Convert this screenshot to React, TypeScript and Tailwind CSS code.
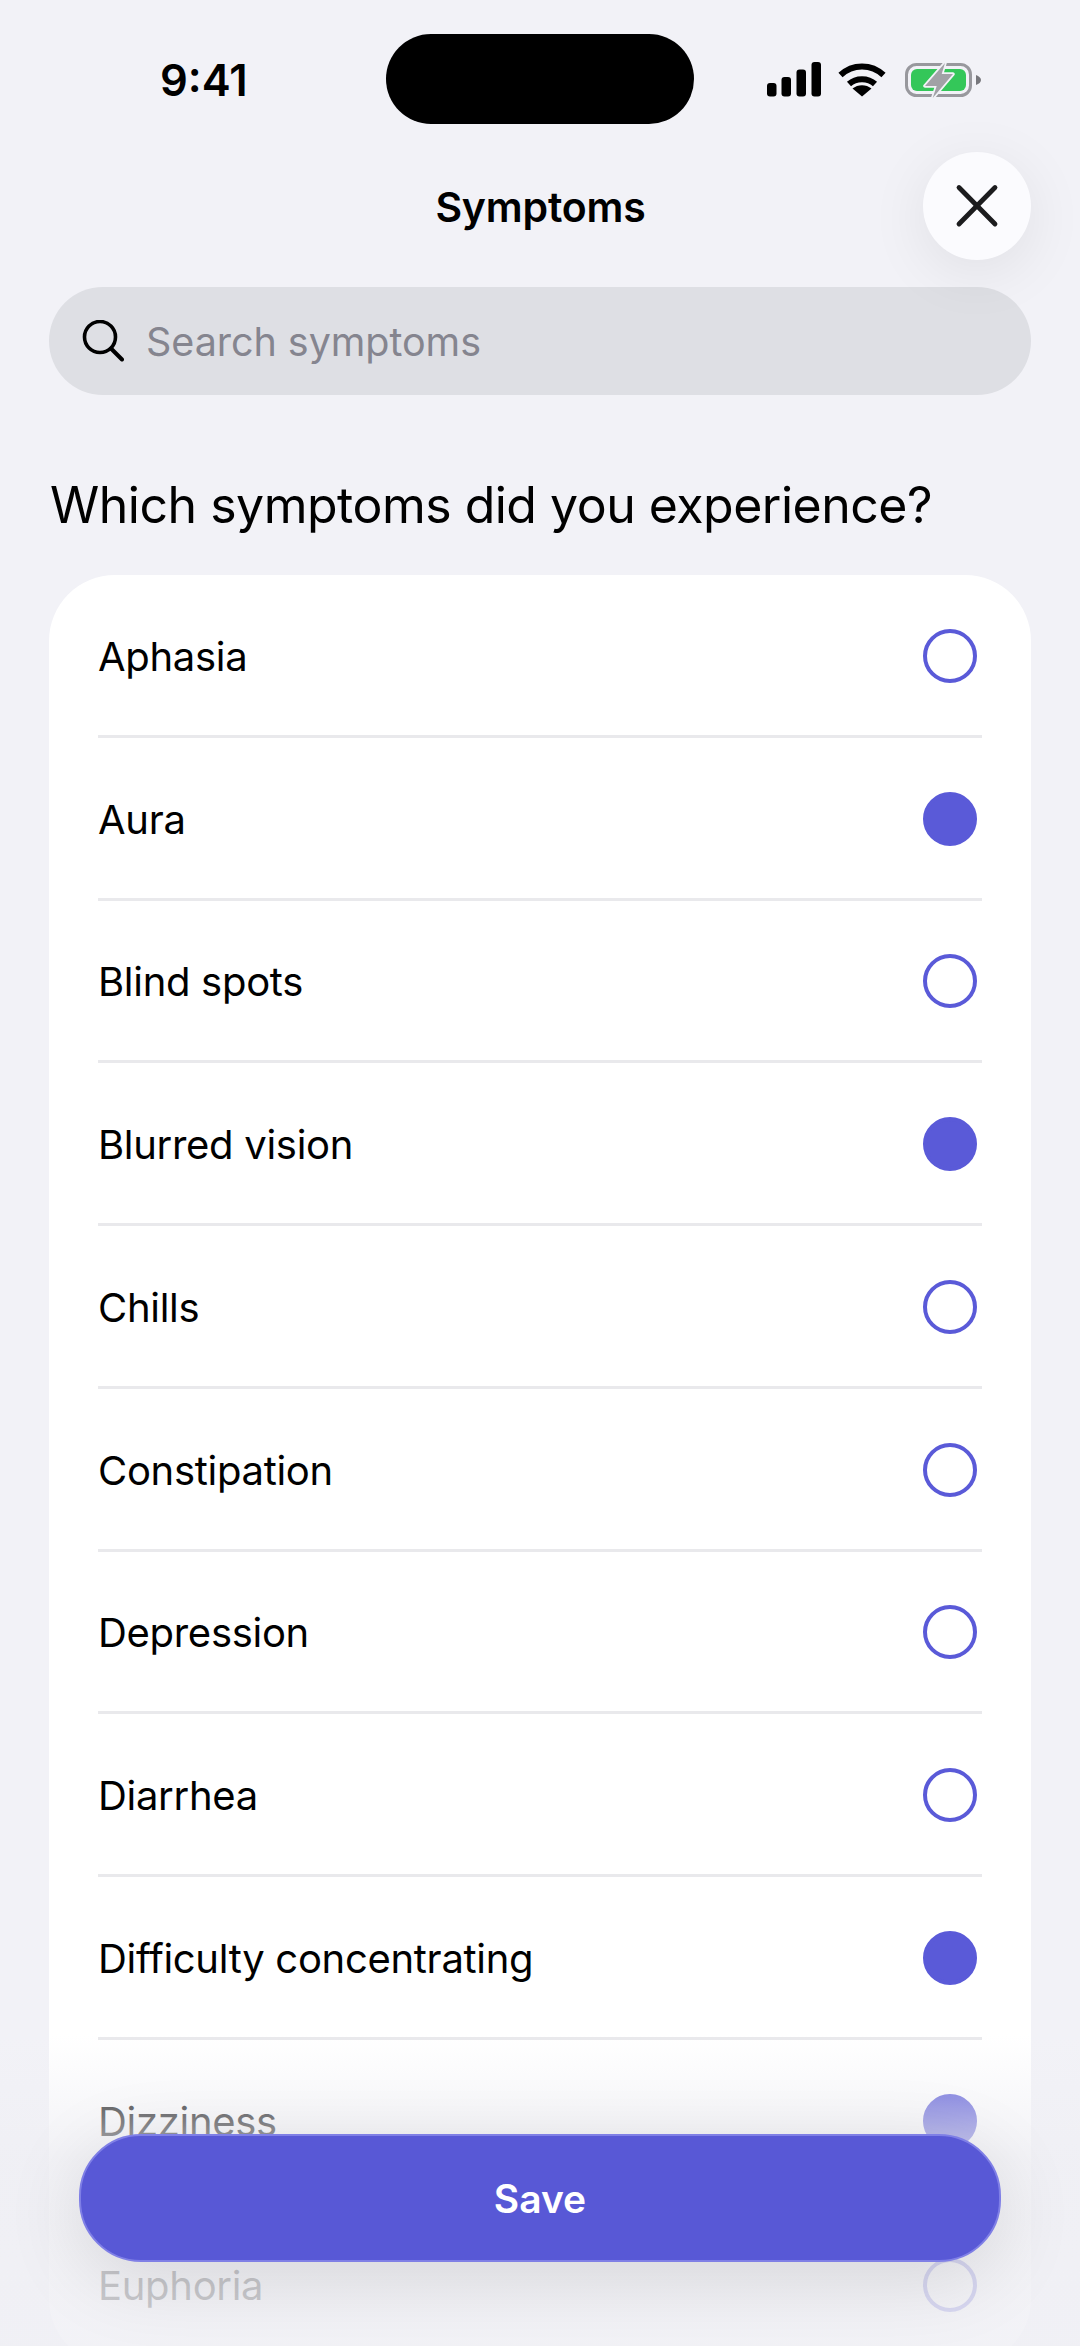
const symptoms = [
  { name: 'Aphasia', selected: false },
  { name: 'Aura', selected: true },
  { name: 'Blind spots', selected: false },
  { name: 'Blurred vision', selected: true },
  { name: 'Chills', selected: false },
  { name: 'Constipation', selected: false },
  { name: 'Depression', selected: false },
  { name: 'Diarrhea', selected: false },
  { name: 'Difficulty concentrating', selected: true },
  { name: 'Dizziness', selected: true },
  { name: 'Euphoria', selected: false },
];

function StatusIcons() {
  return (
    <div className="flex items-start">
      {/* Signal */}
      <svg width="54" height="35" viewBox="0 0 54 35" fill="#000">
        <rect x="0" y="21" width="9.5" height="13.5" rx="3" />
        <rect x="14.5" y="15" width="9.5" height="19.5" rx="3" />
        <rect x="29.5" y="7.5" width="9.5" height="27" rx="3" />
        <rect x="44.5" y="0" width="9.5" height="34.5" rx="3" />
      </svg>
      {/* Wifi */}
      <svg width="48" height="35" viewBox="0 0 48 35" fill="none" stroke="#000" strokeWidth="6" className="ml-[17px]">
        <path d="M2.5 13C14.5 1.5 33.5 1.5 45.5 13" />
        <path d="M11 22C18 15.5 30 15.5 37 22" />
        <path d="M24 34.5L14.5 26.5C20 22 28 22 33.5 26.5Z" fill="#000" stroke="none" />
      </svg>
      {/* Battery */}
      <svg width="78" height="37" viewBox="0 0 78 37" className="ml-[19px]">
        <rect x="1.5" y="2.5" width="64" height="31" rx="10" fill="none" stroke="#98989d" strokeWidth="3" />
        <rect x="6" y="7" width="55" height="22" rx="6" fill="#34c759" />
        <path d="M71 13C74 14 76 16 76 18C76 20 74 22 71 23Z" fill="#77777c" />
        <path
          d="M40 1L20 24H31.7L27.7 36L48 12H36.7Z"
          fill="#a1a1a6"
          stroke="#f2f2f7"
          strokeWidth="3.5"
          strokeLinejoin="round"
          paintOrder="stroke"
        />
      </svg>
    </div>
  );
}

function SymptomRow({ name, selected, last }: { name: string; selected: boolean; last: boolean }) {
  return (
    <div className={`flex h-[162.75px] items-center justify-between ${last ? '' : 'border-b-[3px] border-[#e9e9ec]'}`}>
      <span className="pt-[4px] text-[40px] leading-none tracking-[-0.3px] text-black">{name}</span>
      <span
        className={`mr-[5px] mt-[2px] h-[54px] w-[54px] rounded-full border-[4px] border-[#5a5ad8] ${selected ? 'bg-[#5a5ad8]' : 'bg-white'}`}
      />
    </div>
  );
}

export default function App() {
  return (
    <div className="relative h-[2346px] w-[1080px] overflow-hidden bg-[#f2f2f7] font-['Inter',sans-serif]">
      {/* Status bar */}
      <div className="flex h-[152px] items-start pl-[160px]">
        <span className="mt-[56px] w-[226px] text-[43.5px] font-semibold leading-[48px] text-black">9:41</span>
        <div className="mt-[34px] h-[90px] w-[308px] rounded-full bg-black" />
        <div className="ml-[73px] mt-[62px]">
          <StatusIcons />
        </div>
      </div>

      {/* Header */}
      <header className="flex h-[108px] items-center justify-between pl-[50px] pr-[49px]">
        <div className="w-[108px]" />
        <h1 className="pt-[2px] text-[41px] font-semibold leading-none tracking-[-0.2px] text-black">Symptoms</h1>
        <button className="flex h-[108px] w-[108px] items-center justify-center rounded-full bg-[#fbfbfe] shadow-[0_12px_60px_rgba(0,0,0,0.08)]">
          <svg width="48" height="48" viewBox="0 0 48 48" fill="none" stroke="#1c1c1e" strokeWidth="4.8" strokeLinecap="round">
            <path d="M6 5.5L42 42" />
            <path d="M42 5.5L6 42" />
          </svg>
        </button>
      </header>

      {/* Search */}
      <div className="mx-[49px] mt-[27px] flex h-[108px] items-center gap-[22px] rounded-[54px] bg-[#dedfe4] pl-[33px]">
        <svg width="42" height="42" viewBox="0 0 42 42" fill="none" stroke="#000" strokeWidth="3.6" strokeLinecap="round">
          <circle cx="18" cy="17" r="15.5" />
          <path d="M29 28.5L40 39.5" strokeWidth="4" />
        </svg>
        <span className="pt-[3px] text-[39.5px] leading-none tracking-[-0.05px] text-[#85858f]">Search symptoms</span>
      </div>

      <h2 className="ml-[50px] mt-[85px] text-[50px] leading-[50px] tracking-[-0.5px] text-black">
        Which symptoms did you experience?
      </h2>

      {/* List */}
      <div className="mx-[49px] mt-[45px] rounded-[66px] bg-white px-[49px]">
        {symptoms.map((s, i) => (
          <SymptomRow key={s.name} name={s.name} selected={s.selected} last={i === symptoms.length - 1} />
        ))}
      </div>

      {/* Bottom fade + save */}
      <div className="absolute inset-x-0 bottom-0 h-[310px] bg-gradient-to-b from-[#f2f2f700] via-[#efeff4c8] via-40% to-[#f0f0f5d8]" />
      <button className="absolute bottom-[84px] left-[79px] flex h-[128px] w-[922px] items-center justify-center rounded-[62px] border-2 border-[#7f7fe6] bg-[#5858d6] pt-[2px] text-[39px] font-semibold text-white shadow-[0_16px_80px_rgba(0,0,0,0.12)]">
        Save
      </button>
    </div>
  );
}
